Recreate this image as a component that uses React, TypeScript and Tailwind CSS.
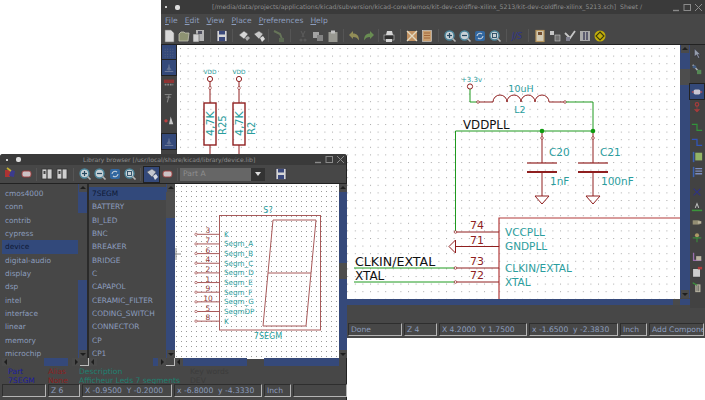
import React from 'react'

const BAR = 'bg-[#474747]'
const TEAL = '#2a9d9d'
const RED = '#8f1f1f'
const GREEN = '#1f9a1f'

// tiny toolbar glyphs, they are blurry in the reference so keep them simple
const Glyph = ({ kind }: { kind: string }) => {
  switch (kind) {
    case 'page':
      return <path d="M3 1h6l3 3v9H3z" fill="#f2f2f2" stroke="#777" strokeWidth="0.6" />
    case 'folder':
      return <path d="M2 5l2-2h3l1 1h4l-1 8H2z" fill="#9aa07a" stroke="#d8d8c8" strokeWidth="0.8" />
    case 'saveas':
      return <g><rect x="4" y="1" width="8" height="11" fill="#c8c8c8" /><rect x="1" y="5" width="6" height="8" fill="#e8e8e8" stroke="#555" strokeWidth="0.6" /><rect x="6" y="2" width="4" height="3" fill="#556" /></g>
    case 'save':
      return <g><rect x="2" y="1.5" width="10" height="11" fill="#f0f0f0" stroke="#334" strokeWidth="0.7" /><rect x="4" y="2" width="6" height="3.5" fill="#3a4a86" /><rect x="4" y="8" width="6" height="4" fill="#3a4a86" /></g>
    case 'lib':
      return <g><path d="M2 6l5-4 4 3-4 5z" fill="#efefef" stroke="#555" strokeWidth="0.5" /><path d="M8 9l3-2 2 2-3 3z" fill="#bbb" /></g>
    case 'lib2':
      return <g><path d="M2 5l5-3 4 3-4 5z" fill="#dedede" stroke="#555" strokeWidth="0.5" /><path d="M8 9l3-2 2 3-3 3z" fill="#f4f4f4" /></g>
    case 'tree':
      return <g><path d="M2 2l6 3 2 5" stroke="#6c7c5c" strokeWidth="2" fill="none" /><rect x="7" y="9" width="5" height="4" fill="#5f6f55" /></g>
    case 'cut':
      return <g><path d="M5 2l3 6M9 2L6 8" stroke="#5d5d5d" strokeWidth="1.2" /><circle cx="5" cy="11" r="1.6" fill="#5d5d5d" /><circle cx="9" cy="11" r="1.6" fill="#5d5d5d" /></g>
    case 'copy':
      return <g><rect x="2" y="3" width="6" height="6" fill="#b4b4b4" /><rect x="6" y="6" width="6" height="6" fill="#8e8e8e" /></g>
    case 'paste':
      return <g><rect x="2.5" y="3" width="9" height="10" fill="#a8a8a0" /><rect x="5" y="1.5" width="4" height="3" fill="#d8d8d8" /></g>
    case 'undo':
      return <path d="M2 6l4-4v2.5c4 0 6 2.5 6 7-1.5-2.5-3-3.5-6-3.5V10z" fill="#a09a5a" />
    case 'redo':
      return <path d="M12 6L8 2v2.5c-4 0-6 2.5-6 7 1.5-2.5 3-3.5 6-3.5V10z" fill="#6f9a55" />
    case 'print':
      return <g><rect x="2" y="6" width="10" height="5" fill="#2d2d2d" stroke="#ddd" strokeWidth="0.6" /><path d="M4 6l1-4h5l1 4z" fill="#eee" /><rect x="4" y="10" width="6" height="3" fill="#eee" /></g>
    case 'plot':
      return <g><rect x="2" y="2" width="10" height="10" fill="#d8a068" /><path d="M2 2l10 10M12 2L2 12" stroke="#fff3d8" strokeWidth="1.4" /></g>
    case 'sheet':
      return <g><rect x="2.5" y="1.5" width="9" height="11" fill="#e2b078" stroke="#eee" strokeWidth="0.6" /><path d="M4 4h6M4 6.5h6M4 9h6" stroke="#a55a2a" strokeWidth="0.8" /></g>
    case 'zin':
    case 'zout':
    case 'zfit':
      return <g><circle cx="6.5" cy="6.5" r="4.5" fill="#dfeaf0" stroke="#4f93ad" strokeWidth="1.4" /><path d="M9.5 9.5l3 3" stroke="#c8c8c8" strokeWidth="1.6" />{kind !== 'zfit' && <path d="M4 6.5h5" stroke="#224a66" strokeWidth="1.2" />}{kind === 'zin' && <path d="M6.5 4v5" stroke="#224a66" strokeWidth="1.2" />}{kind === 'zfit' && <rect x="4.5" y="4.5" width="4" height="4" fill="none" stroke="#224a66" strokeWidth="0.9" />}</g>
    case 'zredraw':
      return <g><rect x="2" y="2" width="10" height="10" rx="2" fill="#2f6db0" /><path d="M4 7a3 3 0 0 1 5-2M10 7a3 3 0 0 1-5 2" stroke="#dbe8f5" strokeWidth="1.1" fill="none" /></g>
    case 'js':
      return <text x="1" y="10" fontSize="8" fill="#2a2f9a" fontStyle="italic">J/S</text>
    case 'comp':
      return <g><rect x="3" y="1.5" width="8" height="11" fill="#e8e0c8" stroke="#caa25f" strokeWidth="1.2" /><rect x="5" y="3" width="4" height="3" fill="#7a4f2a" /></g>
    case 'net':
      return <g><rect x="2" y="2" width="4" height="4" fill="#ddd" /><rect x="7" y="6" width="5" height="6" fill="#777" stroke="#ddd" strokeWidth="0.6" /></g>
    case 'drc':
      return <g><path d="M2 4l5 5 5-7" stroke="#ddd" strokeWidth="1.8" fill="none" /><rect x="3" y="8" width="4" height="4" fill="#889" /></g>
    case 'bom':
      return <g><rect x="2" y="2" width="10" height="10" fill="#bcbcbc" /><path d="M6 3v8M9 3v8" stroke="#3a3a5a" strokeWidth="1.4" /></g>
    case 'kicad':
      return <g><circle cx="7" cy="7" r="5.5" fill="#d8c000" /><path d="M7 3l4 4-4 4-4-4z" fill="none" stroke="#3a3a00" strokeWidth="1.1" /></g>
    case 'grid':
      return <g fill="#6d7484">{[2, 5, 8, 11].map((y) => [2, 5, 8, 11].map((x) => <rect key={`${x}-${y}`} x={x} y={y} width="1" height="1" />))}</g>
    case 'units':
      return <g><path d="M7 3v7M2 11h10" stroke="#8a93a8" strokeWidth="1" /><path d="M4 9h6L7 5z" fill="#6f7c98" /></g>
    case 'mm':
      return <g><rect x="1" y="3" width="12" height="4" fill="#a03030" /><path d="M2 9h10" stroke="#999" strokeWidth="2" strokeDasharray="2 1" /></g>
    case 'cursor':
      return <g><path d="M2 3h8M4 6h5" stroke="#b0b0b0" strokeWidth="0.9" /><path d="M7 4l-2 8" stroke="#999" strokeWidth="1.3" /></g>
    case 'pin':
      return <g><circle cx="3.5" cy="8" r="2" fill="#d84040" /><path d="M7 12l2-9 3 9z" fill="#e8e8e8" /></g>
    case 'sel':
      return <g><path d="M4 1v9l2.5-2 2 4 1.5-1-2-3.5H11z" fill="#aab4c8" stroke="#223" strokeWidth="0.5" /></g>
    case 'hier':
      return <g><path d="M2 2l8 9" stroke="#c8d0d8" strokeWidth="1.6" /><rect x="7" y="8" width="5" height="5" fill="#5a9a5a" /><rect x="2" y="3" width="4" height="3" fill="#46689a" /></g>
    case 'addcomp':
      return <g><rect x="3" y="4" width="8" height="6" rx="2" fill="#efe6ea" /><path d="M1 7h2M11 7h2" stroke="#d05050" strokeWidth="1.6" /></g>
    case 'power':
      return <g><circle cx="7" cy="4" r="2" fill="none" stroke="#c03a3a" strokeWidth="1.4" /><path d="M7 6v4M4 10h6l-3 3z" stroke="#c03a3a" fill="#c03a3a" strokeWidth="0.8" /></g>
    case 'wire':
      return <path d="M1 4h6v7h6" fill="none" stroke="#2eaa3a" strokeWidth="1.4" />
    case 'bus':
      return <path d="M1 4h6v7h6" fill="none" stroke="#2e5ad8" strokeWidth="1.5" />
    case 'entryg':
      return <g><rect x="5" y="2" width="8" height="9" fill="#a8d070" /><path d="M3 1v12" stroke="#3a6ad0" strokeWidth="1.8" /></g>
    case 'entryb':
      return <g><path d="M5 3h8M5 6h8M5 9h8" stroke="#8aa0e0" strokeWidth="1.6" /><path d="M3 1v12" stroke="#3a6ad0" strokeWidth="1.8" /></g>
    case 'noconn':
      return <path d="M3 3l8 8M11 3l-8 8" stroke="#2a2f9a" strokeWidth="1.2" />
    case 'label':
      return <g><path d="M5 8l2-5 2 5" stroke="#e0e0e0" strokeWidth="1.2" fill="none" /><path d="M1 11h12" stroke="#3aaa3a" strokeWidth="1.8" /></g>
    case 'glabel':
      return <g><rect x="2" y="5" width="8" height="5" fill="#a8a080" /><rect x="8" y="6" width="4" height="3" fill="#d8d0b0" /></g>
    case 'hlabel':
      return <g><circle cx="7" cy="5" r="2.4" fill="#c8b070" /><path d="M2 8h10M7 7v6" stroke="#3a9a3a" strokeWidth="1.4" /></g>
    case 'hsheet':
      return <g><path d="M3 2v9h9" stroke="#b07ac8" strokeWidth="1.5" fill="none" /><rect x="6" y="6" width="6" height="5" fill="#d8d0b8" /></g>
    case 'text':
      return <g><rect x="2" y="3" width="9" height="10" fill="#f0f0f0" stroke="#222" strokeWidth="0.8" /><rect x="8" y="1" width="5" height="3" fill="#c83a3a" /></g>
    case 'del':
      return <g><rect x="5" y="4" width="6" height="9" fill="#ddd8c0" /><path d="M2 2l5 3" stroke="#3aaa3a" strokeWidth="1.6" /><path d="M7 5v7M9 5v7" stroke="#444" strokeWidth="0.8" /></g>
    case 'libedit':
      return <g><rect x="1" y="3" width="5" height="7" fill="#c03030" /><path d="M5 9l2-6 4 1-1 6z" fill="#3a3a9a" /><path d="M3 1l4 3" stroke="#d8c030" strokeWidth="1.6" /></g>
    case 'chip':
      return <g><rect x="3" y="4" width="9" height="6" rx="2" fill="#e4d8dc" stroke="#b03a3a" strokeWidth="0.9" /></g>
    case 'book':
      return <g><rect x="2" y="2" width="10" height="10" fill="#e8e8e8" stroke="#333" strokeWidth="0.8" /><path d="M7 2v10" stroke="#333" strokeWidth="1.2" /><rect x="3.5" y="4" width="2" height="3" fill="#444" /></g>
    default:
      return null
  }
}

const Icon = ({ kind, active }: { kind: string; active?: boolean }) => (
  <div className={`w-[15px] h-[15px] shrink-0 flex items-center justify-center ${active ? 'bg-[#34497a] outline outline-1 outline-[#222]' : ''}`}>
    <svg className="opacity-[0.85]" width="14" height="14" viewBox="0 0 14 14"><Glyph kind={kind} /></svg>
  </div>
)

// side bar icons are a bit smaller than the top toolbar ones
const SideIcon = ({ kind, active }: { kind: string; active?: boolean }) => (
  <div className={`w-[14px] h-[15px] shrink-0 flex items-center justify-center ${active ? 'bg-[#34497a] outline outline-1 outline-[#222]' : ''}`}>
    <svg className="opacity-[0.8]" width="12" height="12" viewBox="0 0 14 14"><Glyph kind={kind} /></svg>
  </div>
)

const Sep = ({ className }: { className: string }) => <div className={`shrink-0 h-[13px] flex justify-center ${className}`}><div className="w-px bg-[#555]" /></div>

const WinButtons = () => (
  <div className="flex items-center gap-[2px] text-[#8a8a8a] shrink-0">
    <svg width="9" height="9" viewBox="0 0 9 9"><path d="M1 7.5h6" stroke="currentColor" strokeWidth="1.4" /></svg>
    <svg width="9" height="9" viewBox="0 0 9 9"><rect x="1" y="1.5" width="6.5" height="6" fill="none" stroke="currentColor" /></svg>
    <svg width="9" height="9" viewBox="0 0 9 9"><path d="M1 1l7 7M8 1L1 8" stroke="currentColor" /></svg>
  </div>
)

const TitleIcons = () => (
  <div className="flex items-center gap-[8px] shrink-0">
    <div className="w-[2px] h-[2px] bg-[#ccc]" />
    <div className="w-[5px] h-[5px] bg-[#ddd] rounded-[2px]" />
  </div>
)

const Arrow = ({ dir }: { dir: 'up' | 'down' | 'left' | 'right' }) => {
  const d = { up: 'M1 5l3-3 3 3z', down: 'M1 3l3 3 3-3z', left: 'M5 1L2 4l3 3z', right: 'M3 1l3 3-3 3z' }[dir]
  return (
    <div className="w-[8px] h-[8px] shrink-0 bg-[#4a4a4a] flex items-center justify-center">
      <svg width="8" height="8" viewBox="0 0 8 8"><path d={d} fill="#1e1e1e" /></svg>
    </div>
  )
}

const Cell = ({ children, className }: { children?: React.ReactNode; className: string }) => (
  <div className={`h-[13px] shrink-0 pl-[2px] flex items-center text-[7.6px] text-[#8c9dbe] whitespace-nowrap overflow-hidden border-t border-l border-t-[#2e2e2e] border-l-[#2e2e2e] border-b border-r border-b-[#b4b4b4] border-r-[#b4b4b4] ${className}`}>{children}</div>
)

const Menu = ({ first, rest, className }: { first: string; rest: string; className: string }) => (
  <span className={className}><span className="underline">{first}</span>{rest}</span>
)

const mainTools: [string, string?][] = [
  ['page'], ['folder'], ['saveas', 'w-[8px]'], ['save', 'w-[7px]'], ['lib'], ['lib2', 'w-[5px]'], ['tree', 'w-[9px]'],
  ['cut'], ['copy'], ['paste', 'w-[6px]'], ['undo'], ['redo', 'w-[5px]'], ['print', 'w-[8px]'], ['plot'], ['sheet', 'w-[8px]'],
  ['zin'], ['zout'], ['zredraw'], ['zfit', 'w-[8px]'], ['js', 'w-[7px]'], ['comp'], ['net'], ['drc'], ['bom'], ['kicad'],
]

const Pin = ({ x, y }: { x: number; y: number }) => <circle cx={x} cy={y} r="1.3" fill="white" stroke={RED} strokeWidth="0.7" />

const Capacitor = ({ x, name, value }: { x: number; name: string; value: string }) => (
  <g>
    <path d={`M${x} 130V162M${x} 171V195`} stroke={RED} strokeWidth="1" />
    <path d={`M${x - 15} 162H${x + 15}`} stroke={RED} strokeWidth="1.2" />
    <path d={`M${x - 15} 171H${x + 15}`} stroke={RED} strokeWidth="2" />
    <path d={`M${x - 7} 195H${x + 7}L${x} 203Z`} fill="none" stroke={RED} strokeWidth="1" />
    <Pin x={x} y={137} />
    <circle cx={x} cy={130} r="2.3" fill="#109a10" />
    <text x={x + 7} y={155} fontSize="10.5" fill={TEAL}>{name}</text>
    <text x={x + 8} y={184} fontSize="10.5" fill={TEAL}>{value}</text>
  </g>
)

const Resistor = ({ x, value, name }: { x: number; value: string; name: string }) => (
  <g>
    <text x={x} y={73} fontSize="5.8" fill={TEAL} textAnchor="middle">VDD</text>
    <circle cx={x} cy={78} r="2.6" fill="white" stroke={RED} strokeWidth="1" />
    <path d={`M${x} 81V102M${x} 144V156`} stroke={RED} strokeWidth="1" />
    <path d={`M${x} 85l1.5 2-1.5 2-1.5-2z`} fill="white" stroke={RED} strokeWidth="0.6" />
    <rect x={x - 6} y={102} width="12" height="42" fill="none" stroke={RED} strokeWidth="1.4" />
    <text transform={`translate(${x + 4} 135) rotate(-90)`} fontSize="11" fill={TEAL}>{value}</text>
    <text transform={`translate(${x + 16} 134) rotate(-90)`} fontSize="10" fill={TEAL}>{name}</text>
  </g>
)

const icPins: [number, string, string][] = [
  [231, '74', 'VCCPLL'],
  [245.5, '71', 'GNDPLL'],
  [267, '73', 'CLKIN/EXTAL'],
  [281, '72', 'XTAL'],
]

const MainCanvas = () => (
  <svg className="w-[503px] h-[254px] block shrink-0" viewBox="177 44 503 254">
    <defs>
      <pattern id="dots" x="180" y="47" width="7.6" height="7.6" patternUnits="userSpaceOnUse">
        <rect width="1" height="1" fill="#a8a8a8" />
      </pattern>
    </defs>
    <rect x="177" y="44" width="503" height="254" fill="white" />
    <rect x="177" y="44" width="503" height="254" fill="url(#dots)" />
    <Resistor x={210} value="4,7K" name="R25" />
    <Resistor x={239} value="4,7K" name="R2" />

    <text x="461" y="81" fontSize="7" fill={TEAL}>+3.3v</text>
    <circle cx="470" cy="85.5" r="2.6" fill="white" stroke={RED} strokeWidth="1" />
    <path d="M470 88V101H478" fill="none" stroke={GREEN} strokeWidth="1" />
    <path d="M478 101H493a7 7 0 0 1 14 0a7 7 0 0 1 14 0a7 7 0 0 1 14 0a7 7 0 0 1 14 0H565" fill="none" stroke={RED} strokeWidth="1" />
    <Pin x={478} y={101} />
    <Pin x={565} y={101} />
    <path d="M566 101H593V130" fill="none" stroke={GREEN} strokeWidth="1" />
    <text x="521" y="91" fontSize="9.5" fill={TEAL} textAnchor="middle">10uH</text>
    <text x="520" y="112" fontSize="9.5" fill={TEAL} textAnchor="middle">L2</text>

    <text x="463" y="128" fontSize="11.8" fill="#111">VDDPLL</text>
    <path d="M455.5 231V130H593" fill="none" stroke={GREEN} strokeWidth="1" />
    <Capacitor x={542} name="C20" value="1nF" />
    <Capacitor x={593} name="C21" value="100nF" />

    <path d="M680 217H499V298" fill="none" stroke="#b23a3a" strokeWidth="1.2" />
    {icPins.map(([y, num, label]) => (
      <g key={num}>
        <path d={`M456 ${y}H499`} stroke={RED} strokeWidth="1" />
        <text x="477" y={y - 3} fontSize="11" fill={RED} textAnchor="middle">{num}</text>
        <text x="505" y={y + 3.5} fontSize="10.5" fill={TEAL}>{label}</text>
      </g>
    ))}
    <Pin x={455.5} y={231} />
    <path d="M455.5 239L449 245.5L455.5 252Z" fill="white" stroke={RED} strokeWidth="1" />
    <path d="M354 267H455M354 281H455" stroke={GREEN} strokeWidth="1" />
    <Pin x={455.5} y={267} />
    <Pin x={455.5} y={281} />
    <text x="355" y="265" fontSize="12.6" fill="#111">CLKIN/EXTAL</text>
    <text x="355" y="279" fontSize="12" fill="#111">XTAL</text>
  </svg>
)

const libPins: [string, string][] = [
  ['3', 'K'], ['7', 'Segm_A'], ['6', 'Segm_B'], ['4', 'Segm_C'], ['2', 'Segm_D'],
  ['1', 'Segm_E'], ['9', 'Segm_F'], ['10', 'Segm_G'], ['5', 'SegmDP'], ['8', 'K'],
]

const LibCanvas = () => (
  <svg className="w-[164px] h-[175px] block shrink-0" viewBox="175 183 164 175">
    <defs>
      <pattern id="libdots" x="176" y="185" width="5" height="5" patternUnits="userSpaceOnUse">
        <rect width="1" height="1" fill="#9a9a9a" />
      </pattern>
    </defs>
    <rect x="175" y="183" width="164" height="175" fill="white" />
    <rect x="175" y="183" width="164" height="175" fill="url(#libdots)" />
    <path d="M176 247V259M175 253H181" stroke="#888" strokeWidth="1" />
    <text x="268" y="212" fontSize="8" fill={TEAL} textAnchor="middle">S?</text>
    <rect x="219.5" y="214.5" width="101" height="114.5" fill="none" stroke="#a85a5a" strokeWidth="1" />
    {libPins.map(([num, label], i) => {
      const y = 233.3 + i * 9.65
      return (
        <g key={i}>
          <path d={`M196 ${y}H219`} stroke="#a85a5a" strokeWidth="1" />
          <circle cx="196" cy={y} r="1.2" fill="white" stroke="#a04a4a" strokeWidth="0.7" />
          <text x="208" y={y - 1} fontSize="7.5" fill="#8f3a3a" textAnchor="middle">{num}</text>
          <text x="224" y={y + 2.5} fontSize="7.2" fill={TEAL}>{label}</text>
        </g>
      )
    })}
    <path d="M273 219H316L306 325H263Z M268 272H311" fill="none" stroke="#a85a5a" strokeWidth="1" />
    <text x="268" y="338" fontSize="8" fill={TEAL} textAnchor="middle">7SEGM</text>
  </svg>
)

const libs = ['cmos4000', 'conn', 'contrib', 'cypress', 'device', 'digital-audio', 'display', 'dsp', 'intel', 'interface', 'linear', 'memory', 'microchip']
const parts = ['7SEGM', 'BATTERY', 'BI_LED', 'BNC', 'BREAKER', 'BRIDGE', 'C', 'CAPAPOL', 'CERAMIC_FILTER', 'CODING_SWITCH', 'CONNECTOR', 'CP', 'CP1']

const ListRows = ({ items, selected }: { items: string[]; selected: string }) => (
  <div className="flex-1 pt-[3px] overflow-hidden">
    {items.map((item) => (
      <div key={item} className={`h-[13.33px] pl-[3px] flex items-center text-[7.4px] whitespace-nowrap ${item === selected ? 'bg-[#32497b] text-[#0f1a36]' : 'text-[#8c9dbe]'}`}>
        {item}
      </div>
    ))}
  </div>
)

const libTools: [string, string?, boolean?][] = [
  ['libedit'], ['chip', 'w-[6px]'], ['book'], ['book', 'w-[8px]'], ['zin'], ['zout'], ['zredraw'], ['zfit', 'w-[7px]'], ['lib2', undefined, true], ['chip', 'w-[6px]'],
]

export default function App() {
  return (
    <div className="relative w-[705px] h-[400px] bg-white overflow-hidden font-['DejaVu_Sans',sans-serif]">
      {/* main schematic window */}
      <div className={`absolute left-[161px] top-0 w-[544px] h-[338px] flex flex-col ${BAR} rounded-tr-[3px]`}>
        <div className="h-[14px] shrink-0 bg-[#3a3a3a] pl-[4px] pr-[2px] flex items-center">
          <TitleIcons />
          <span className="ml-[32px] flex-1 text-[6.2px] text-[#8e8e8e] whitespace-pre">[/media/data/projects/applications/kicad/subversion/kicad-core/demos/kit-dev-coldfire-xilinx_5213/kit-dev-coldfire-xilinx_5213.sch]  Sheet /</span>
          <WinButtons />
        </div>
        <div className="h-[13px] shrink-0 flex items-center text-[7.6px] text-[#8c9dbe]">
          <Menu first="F" rest="ile" className="ml-[4px]" />
          <Menu first="E" rest="dit" className="ml-[7px]" />
          <Menu first="V" rest="iew" className="ml-[7px]" />
          <Menu first="P" rest="lace" className="ml-[7px]" />
          <Menu first="P" rest="references" className="ml-[7px]" />
          <Menu first="H" rest="elp" className="ml-[7px]" />
        </div>
        <div className="h-[17px] shrink-0 flex items-center">
          {mainTools.map(([kind, sep], i) => (
            <React.Fragment key={i}>
              <Icon kind={kind} />
              {sep && <Sep className={sep} />}
            </React.Fragment>
          ))}
        </div>
        <div className="flex h-[264px] shrink-0">
          <div className="w-[16px] shrink-0 flex flex-col items-center border-t border-[#222] bg-[#424242]">
            <SideIcon kind="grid" active />
            <SideIcon kind="units" active />
            <SideIcon kind="mm" />
            <SideIcon kind="cursor" />
            <div className="h-[7px]" />
            <SideIcon kind="pin" />
            <div className="h-[7px]" />
            <SideIcon kind="units" active />
          </div>
          <div className="flex-1 flex flex-col border-t border-[#222]">
            <div className="flex h-[253px]">
              <MainCanvas />
              <div className="w-[10px] flex flex-col items-center bg-[#35497a]">
                <Arrow dir="up" />
                <div className="h-[16px]" />
                <div className="h-[16px] w-full bg-[#4d4d4d]" />
                <div className="flex-1" />
                <Arrow dir="down" />
              </div>
            </div>
            <div className="h-[6px] mt-[1px] flex bg-[#35497a] justify-end pr-[10px]">
              <div className="w-[7px] h-[6px] bg-[#4a4a4a]" />
            </div>
          </div>
          <div className="w-[15px] shrink-0 flex flex-col border-t border-[#222] bg-[#424242] pt-[1px]">
            <SideIcon kind="sel" />
            <SideIcon kind="hier" />
            <div className="h-[8px]" />
            <SideIcon kind="addcomp" active />
            <SideIcon kind="power" />
            <div className="h-[5px]" />
            <SideIcon kind="wire" />
            <SideIcon kind="bus" />
            <SideIcon kind="entryg" />
            <SideIcon kind="entryb" />
            <div className="h-[5px]" />
            <SideIcon kind="noconn" />
            <SideIcon kind="label" />
            <SideIcon kind="glabel" />
            <SideIcon kind="hlabel" />
            <div className="h-[5px]" />
            <SideIcon kind="hsheet" />
            <SideIcon kind="text" />
            <SideIcon kind="del" />
          </div>
        </div>
        <div className="h-[15px] shrink-0" />
        <div className="flex pl-[187px] gap-[2px]">
          <Cell className="w-[54px]">Done</Cell>
          <Cell className="w-[33px]">Z 4</Cell>
          <Cell className="w-[88px]">X 4.2000&nbsp; Y 1.7500</Cell>
          <Cell className="w-[89px]">x -1.6500&nbsp; y -2.3830</Cell>
          <Cell className="w-[27px]">Inch</Cell>
          <Cell className="w-[55px]">Add Component</Cell>
        </div>
      </div>

      {/* library browser window */}
      <div className={`absolute left-0 top-[154px] w-[347px] h-[246px] flex flex-col ${BAR} rounded-t-[3px] border-r border-[#222]`}>
        <div className="h-[11px] shrink-0 bg-[#3a3a3a] pl-[6px] pr-[1px] flex items-center rounded-t-[3px]">
          <TitleIcons />
          <span className="ml-[62px] flex-1 text-[6.1px] text-[#8e8e8e] whitespace-nowrap">Library browser [/usr/local/share/kicad/library/device.lib]</span>
          <WinButtons />
        </div>
        <div className="h-[18px] shrink-0 pl-[3px] flex items-center">
          {libTools.map(([kind, sep, active], i) => (
            <React.Fragment key={i}>
              <Icon kind={kind} active={active} />
              {sep && <Sep className={sep} />}
            </React.Fragment>
          ))}
          <div className="w-[71px] h-[13px] bg-[#666] pl-[3px] flex items-center text-[7.6px] text-[#8f8f8f]">Part A</div>
          <div className="w-[14px] h-[13px] bg-[#333] flex items-center justify-center">
            <svg width="8" height="6" viewBox="0 0 8 6"><path d="M1 1h6L4 5z" fill="#ddd" /></svg>
          </div>
          <div className="ml-[8px]"><Icon kind="save" /></div>
        </div>
        <div className="flex h-[175px] shrink-0 pl-[2px] border-t border-[#222]">
          <div className="w-[87px] shrink-0 flex border-r-2 border-[#2a2a2a]">
            <ListRows items={libs} selected="device" />
            <div className="w-[9px] shrink-0 flex flex-col items-center bg-[#35497a]">
              <Arrow dir="up" />
              <div className="h-[21px]" />
              <div className="h-[67px] w-full bg-[#474747]" />
              <div className="flex-1" />
              <Arrow dir="down" />
            </div>
          </div>
          <div className="w-[86px] shrink-0 flex">
            <ListRows items={parts} selected="7SEGM" />
            <div className="w-[9px] shrink-0 flex flex-col items-center bg-[#35497a]">
              <Arrow dir="up" />
              <div className="h-[26px] w-full bg-[#4d4d4d]" />
              <div className="flex-1" />
              <Arrow dir="down" />
            </div>
          </div>
          <LibCanvas />
          <div className="w-[8px] shrink-0 flex flex-col items-center bg-[#35497a]">
            <Arrow dir="up" />
            <div className="h-[71px]" />
            <div className="h-[16px] w-full bg-[#4d4d4d]" />
            <div className="flex-1" />
            <Arrow dir="down" />
          </div>
        </div>
        <div className="flex h-[8px] shrink-0 pl-[2px]">
          <div className="w-[87px] flex">
            <Arrow dir="left" />
            <div className="w-[34px]" />
            <div className="w-[24px] bg-[#35497a]" />
            <div className="flex-1" />
            <Arrow dir="right" />
            <div className="w-[9px] border-b border-r border-[#bbb]" />
          </div>
          <div className="w-[86px] flex">
            <Arrow dir="left" />
            <div className="flex-1" />
            <div className="w-[5px] bg-[#35497a]" />
            <Arrow dir="right" />
            <div className="w-[9px] border-b border-r border-[#bbb]" />
          </div>
          <Arrow dir="left" />
          <div className="w-[64px] bg-[#35497a]" />
          <div className="w-[17px]" />
          <div className="w-[75px] bg-[#35497a]" />
        </div>
        <div className="h-[18px] shrink-0 mt-[1px] pl-[8px] grid grid-cols-[40px_31px_111px_1fr] text-[7.6px] leading-[9px] whitespace-nowrap">
          <div className="text-[#1b1b9e]"><div>Part</div><div>7SEGM</div></div>
          <div className="text-[#8a2020]"><div>Alias</div><div>None</div></div>
          <div className="text-[#1f8070]"><div>Description</div><div>Afficheur Leds 7 segments</div></div>
          <div className="text-[#3c3c3c]"><div>Key words</div><div>DEV</div></div>
        </div>
        <div className="flex pl-[2px] gap-[2px] mt-[-1px]">
          <Cell className="w-[44px]" />
          <Cell className="w-[32px]">Z 6</Cell>
          <Cell className="w-[90px]">X -0.9500&nbsp; Y -0.2000</Cell>
          <Cell className="w-[88px]">x -6.8000&nbsp; y -4.3330</Cell>
          <Cell className="w-[27px]">Inch</Cell>
          <Cell className="w-[54px]" />
        </div>
      </div>
    </div>
  )
}
